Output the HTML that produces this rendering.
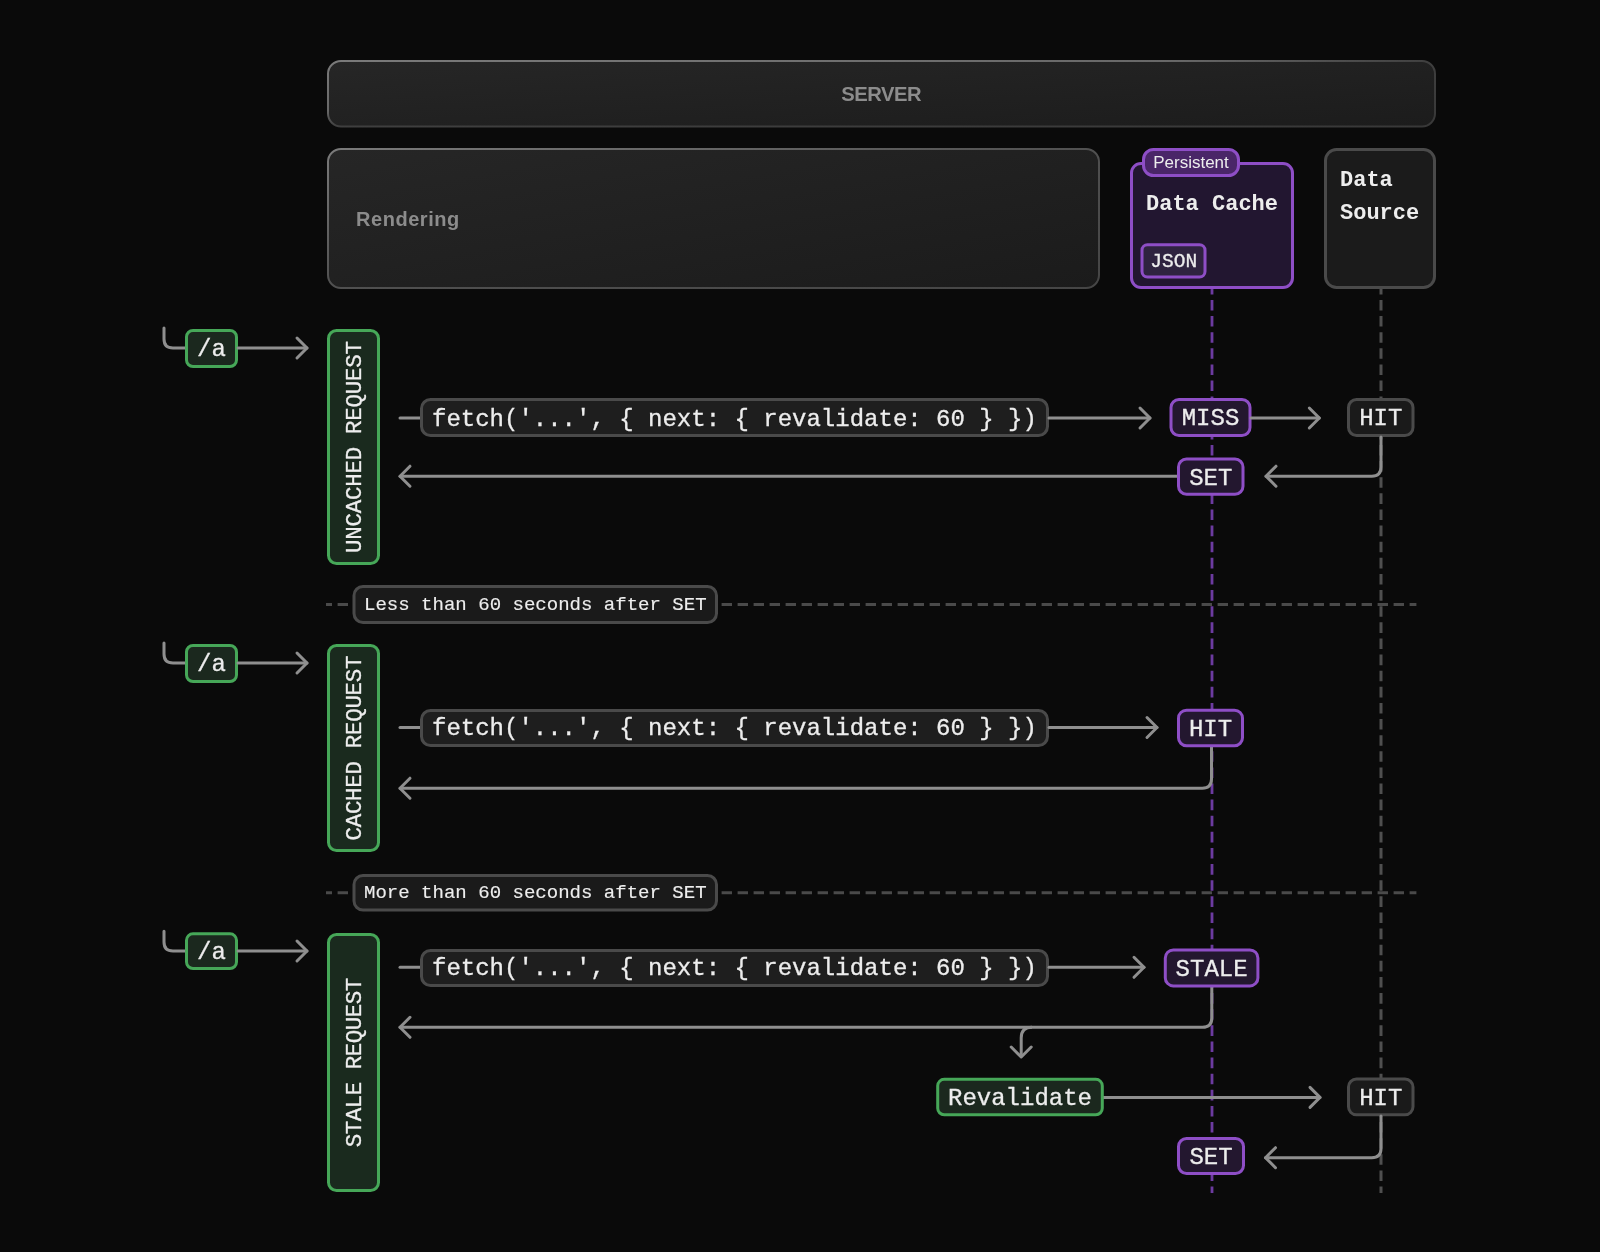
<!DOCTYPE html><html><head><meta charset="utf-8"><style>html,body{margin:0;padding:0;background:#0a0a0a;}svg{display:block;will-change:transform;}</style></head><body>
<svg width="1600" height="1252" viewBox="0 0 1600 1252">
<defs>
<linearGradient id="fill1" x1="0" y1="0" x2="1" y2="1"><stop offset="0" stop-color="#262626"/><stop offset="1" stop-color="#1c1c1c"/></linearGradient>
<linearGradient id="stroke1" x1="0" y1="0" x2="1" y2="1"><stop offset="0" stop-color="#7a7a7a"/><stop offset="0.38" stop-color="#686868"/><stop offset="0.5" stop-color="#3f3f3f"/><stop offset="1" stop-color="#383838"/></linearGradient>
<linearGradient id="fill2" x1="0" y1="0" x2="1" y2="1"><stop offset="0" stop-color="#262626"/><stop offset="1" stop-color="#1b1b1b"/></linearGradient>
<linearGradient id="stroke2" x1="0" y1="0" x2="1" y2="1"><stop offset="0" stop-color="#7a7a7a"/><stop offset="0.5" stop-color="#505050"/><stop offset="1" stop-color="#454545"/></linearGradient>
</defs>
<rect width="1600" height="1252" fill="#0a0a0a"/>
<rect x="328.00" y="61.00" width="1107.00" height="65.50" rx="13" fill="url(#fill1)" stroke="url(#stroke1)" stroke-width="2" />
<text x="881.2" y="100.8" font-family='"Liberation Sans", sans-serif' font-size="20.2" font-weight="bold" fill="#8c8c8c" text-anchor="middle"  letter-spacing="-0.5">SERVER</text>
<rect x="328.00" y="149.00" width="771.00" height="139.00" rx="13" fill="url(#fill2)" stroke="url(#stroke2)" stroke-width="2" />
<text x="356" y="225.5" font-family='"Liberation Sans", sans-serif' font-size="20" font-weight="bold" fill="#8c8c8c" text-anchor="start"  letter-spacing="0.55">Rendering</text>
<path d="M1212,288 V1193" stroke="#6c3ba0" stroke-width="2.8" stroke-dasharray="10.6 5.52" stroke-dashoffset="4.22"/>
<path d="M1381,288 V1193" stroke="#4f4f4f" stroke-width="3" stroke-dasharray="10.6 5.52" stroke-dashoffset="4.22"/>
<rect x="1131.50" y="163.50" width="161.00" height="124.00" rx="9.5" fill="#221630" stroke="#8e4ec6" stroke-width="3" />
<rect x="1143.50" y="149.50" width="95.00" height="26.00" rx="10" fill="#4a2668" stroke="#8e4ec6" stroke-width="3" />
<text x="1191" y="168" font-family='"Liberation Sans", sans-serif' font-size="17" font-weight="normal" fill="#ededed" text-anchor="middle"  >Persistent</text>
<text x="1146" y="210" font-family='"Liberation Mono", monospace' font-size="22" font-weight="bold" fill="#ededed" text-anchor="start"  xml:space="preserve">Data Cache</text>
<rect x="1142.00" y="244.70" width="63.00" height="32.40" rx="5.5" fill="#2f2340" stroke="#8e4ec6" stroke-width="3" />
<text x="1173.7" y="267" font-family='"Liberation Mono", monospace' font-size="19.5" font-weight="normal" fill="#ededed" text-anchor="middle" stroke="#ededed" stroke-width="0.3" >JSON</text>
<rect x="1325.50" y="149.50" width="109.00" height="138.00" rx="11" fill="#1b1b1b" stroke="#4a4a4a" stroke-width="3" />
<text x="1340" y="186" font-family='"Liberation Mono", monospace' font-size="22" font-weight="bold" fill="#ededed" text-anchor="start"  >Data</text>
<text x="1340" y="219" font-family='"Liberation Mono", monospace' font-size="22" font-weight="bold" fill="#ededed" text-anchor="start"  >Source</text>
<path d="M164,328 V339 Q164,348 173,348 H187" fill="none" stroke="#8f8f8f" stroke-width="3" stroke-linecap="round" stroke-linejoin="round" />
<rect x="186.50" y="330.50" width="50.00" height="36.00" rx="6.5" fill="#1b281e" stroke="#46a758" stroke-width="3" />
<text x="211.5" y="356.408" font-family='"Liberation Mono", monospace' font-size="24" font-weight="normal" fill="#ededed" text-anchor="middle" stroke="#ededed" stroke-width="0.3" >/a</text>
<path d="M238,348 H307" fill="none" stroke="#8f8f8f" stroke-width="3" stroke-linecap="round" stroke-linejoin="round" />
<path d="M297,338 L307,348 L297,358" fill="none" stroke="#8f8f8f" stroke-width="3" stroke-linecap="round" stroke-linejoin="round" />
<rect x="328.50" y="330.50" width="50.00" height="233.00" rx="8" fill="#1a2a1e" stroke="#46a758" stroke-width="3" />
<text transform="translate(361.4,447.00) rotate(-90)" x="-106.00" y="0" font-family='"Liberation Mono", monospace' font-size="22.5" fill="#ededed" stroke="#ededed" stroke-width="0.3" textLength="212" lengthAdjust="spacing" xml:space="preserve">UNCACHED REQUEST</text>
<path d="M400,418 H421" fill="none" stroke="#8f8f8f" stroke-width="3" stroke-linecap="round" stroke-linejoin="round" />
<rect x="421.50" y="399.50" width="626.00" height="36.00" rx="9" fill="#1e1e1e" stroke="#4a4a4a" stroke-width="3" />
<text x="432" y="425.908" font-family='"Liberation Mono", monospace' font-size="24" font-weight="normal" fill="#ededed" text-anchor="start" stroke="#ededed" stroke-width="0.3" xml:space="preserve">fetch('...', { next: { revalidate: 60 } })</text>
<path d="M1049,418 H1150" fill="none" stroke="#8f8f8f" stroke-width="3" stroke-linecap="round" stroke-linejoin="round" />
<path d="M1140,408 L1150,418 L1140,428" fill="none" stroke="#8f8f8f" stroke-width="3" stroke-linecap="round" stroke-linejoin="round" />
<rect x="1171.00" y="399.50" width="79.00" height="36.00" rx="8" fill="#23172f" stroke="#8e4ec6" stroke-width="3" />
<text x="1210.5" y="425.408" font-family='"Liberation Mono", monospace' font-size="24" font-weight="normal" fill="#ededed" text-anchor="middle" stroke="#ededed" stroke-width="0.3" >MISS</text>
<path d="M1251,418 H1319.3" fill="none" stroke="#8f8f8f" stroke-width="3" stroke-linecap="round" stroke-linejoin="round" />
<path d="M1309.3,408 L1319.3,418 L1309.3,428" fill="none" stroke="#8f8f8f" stroke-width="3" stroke-linecap="round" stroke-linejoin="round" />
<rect x="1348.50" y="399.50" width="64.50" height="36.00" rx="8" fill="#1a1a1a" stroke="#4a4a4a" stroke-width="3" />
<text x="1380.75" y="425.408" font-family='"Liberation Mono", monospace' font-size="24" font-weight="normal" fill="#ededed" text-anchor="middle" stroke="#ededed" stroke-width="0.3" >HIT</text>
<path d="M1381,437 V467 Q1381,476.2 1371.8,476.2 H1266" fill="none" stroke="#8f8f8f" stroke-width="3" stroke-linecap="round" stroke-linejoin="round" />
<path d="M1276,466.2 L1266,476.2 L1276,486.2" fill="none" stroke="#8f8f8f" stroke-width="3" stroke-linecap="round" stroke-linejoin="round" />
<path d="M1178,476.2 H400" fill="none" stroke="#8f8f8f" stroke-width="3" stroke-linecap="round" stroke-linejoin="round" />
<path d="M410,466.2 L400,476.2 L410,486.2" fill="none" stroke="#8f8f8f" stroke-width="3" stroke-linecap="round" stroke-linejoin="round" />
<rect x="1178.50" y="459.00" width="64.50" height="35.20" rx="8" fill="#23172f" stroke="#8e4ec6" stroke-width="3" />
<text x="1210.75" y="484.50800000000004" font-family='"Liberation Mono", monospace' font-size="24" font-weight="normal" fill="#ededed" text-anchor="middle" stroke="#ededed" stroke-width="0.3" >SET</text>
<path d="M326,604.5 H1416.4" stroke="#4a4a4a" stroke-width="3" stroke-dasharray="10.4 5.6" stroke-dashoffset="4.4"/>
<rect x="354.00" y="586.50" width="362.50" height="36.00" rx="9" fill="#1a1a1a" stroke="#4a4a4a" stroke-width="3" />
<text x="364" y="609.876975" font-family='"Liberation Mono", monospace' font-size="19.05" font-weight="normal" fill="#ededed" text-anchor="start" stroke="#ededed" stroke-width="0.15" xml:space="preserve">Less than 60 seconds after SET</text>
<path d="M164,643 V654 Q164,663 173,663 H187" fill="none" stroke="#8f8f8f" stroke-width="3" stroke-linecap="round" stroke-linejoin="round" />
<rect x="186.50" y="645.50" width="50.00" height="36.00" rx="6.5" fill="#1b281e" stroke="#46a758" stroke-width="3" />
<text x="211.5" y="671.408" font-family='"Liberation Mono", monospace' font-size="24" font-weight="normal" fill="#ededed" text-anchor="middle" stroke="#ededed" stroke-width="0.3" >/a</text>
<path d="M238,663 H307" fill="none" stroke="#8f8f8f" stroke-width="3" stroke-linecap="round" stroke-linejoin="round" />
<path d="M297,653 L307,663 L297,673" fill="none" stroke="#8f8f8f" stroke-width="3" stroke-linecap="round" stroke-linejoin="round" />
<rect x="328.50" y="645.50" width="50.00" height="205.00" rx="8" fill="#1a2a1e" stroke="#46a758" stroke-width="3" />
<text transform="translate(361.4,748.00) rotate(-90)" x="-92.50" y="0" font-family='"Liberation Mono", monospace' font-size="22.5" fill="#ededed" stroke="#ededed" stroke-width="0.3" textLength="185" lengthAdjust="spacing" xml:space="preserve">CACHED REQUEST</text>
<path d="M400,727.5 H421" fill="none" stroke="#8f8f8f" stroke-width="3" stroke-linecap="round" stroke-linejoin="round" />
<rect x="421.50" y="710.50" width="626.00" height="35.00" rx="9" fill="#1e1e1e" stroke="#4a4a4a" stroke-width="3" />
<text x="432" y="735.408" font-family='"Liberation Mono", monospace' font-size="24" font-weight="normal" fill="#ededed" text-anchor="start" stroke="#ededed" stroke-width="0.3" xml:space="preserve">fetch('...', { next: { revalidate: 60 } })</text>
<path d="M1049,727.5 H1157" fill="none" stroke="#8f8f8f" stroke-width="3" stroke-linecap="round" stroke-linejoin="round" />
<path d="M1147,717.5 L1157,727.5 L1147,737.5" fill="none" stroke="#8f8f8f" stroke-width="3" stroke-linecap="round" stroke-linejoin="round" />
<path d="M1211.5,747 V779 Q1211.5,788.2 1202.3,788.2 H400" fill="none" stroke="#8f8f8f" stroke-width="3" stroke-linecap="round" stroke-linejoin="round" />
<path d="M410,778.2 L400,788.2 L410,798.2" fill="none" stroke="#8f8f8f" stroke-width="3" stroke-linecap="round" stroke-linejoin="round" />
<rect x="1178.50" y="710.20" width="64.00" height="35.50" rx="8" fill="#23172f" stroke="#8e4ec6" stroke-width="3" />
<text x="1210.5" y="735.8580000000001" font-family='"Liberation Mono", monospace' font-size="24" font-weight="normal" fill="#ededed" text-anchor="middle" stroke="#ededed" stroke-width="0.3" >HIT</text>
<path d="M326,892.75 H1416.4" stroke="#4a4a4a" stroke-width="3" stroke-dasharray="10.4 5.6" stroke-dashoffset="4.4"/>
<rect x="354.00" y="875.50" width="362.50" height="34.50" rx="9" fill="#1a1a1a" stroke="#4a4a4a" stroke-width="3" />
<text x="364" y="898.126975" font-family='"Liberation Mono", monospace' font-size="19.05" font-weight="normal" fill="#ededed" text-anchor="start" stroke="#ededed" stroke-width="0.15" xml:space="preserve">More than 60 seconds after SET</text>
<path d="M164,931.3 V942 Q164,951 173,951 H187" fill="none" stroke="#8f8f8f" stroke-width="3" stroke-linecap="round" stroke-linejoin="round" />
<rect x="186.50" y="933.80" width="50.00" height="34.70" rx="6.5" fill="#1b281e" stroke="#46a758" stroke-width="3" />
<text x="211.5" y="959.058" font-family='"Liberation Mono", monospace' font-size="24" font-weight="normal" fill="#ededed" text-anchor="middle" stroke="#ededed" stroke-width="0.3" >/a</text>
<path d="M238,951 H307" fill="none" stroke="#8f8f8f" stroke-width="3" stroke-linecap="round" stroke-linejoin="round" />
<path d="M297,941 L307,951 L297,961" fill="none" stroke="#8f8f8f" stroke-width="3" stroke-linecap="round" stroke-linejoin="round" />
<rect x="328.50" y="934.50" width="50.00" height="256.00" rx="8" fill="#1a2a1e" stroke="#46a758" stroke-width="3" />
<text transform="translate(361.4,1062.50) rotate(-90)" x="-84.70" y="0" font-family='"Liberation Mono", monospace' font-size="22.5" fill="#ededed" stroke="#ededed" stroke-width="0.3" textLength="169.4" lengthAdjust="spacing" xml:space="preserve">STALE REQUEST</text>
<path d="M400,967.3 H421" fill="none" stroke="#8f8f8f" stroke-width="3" stroke-linecap="round" stroke-linejoin="round" />
<rect x="421.50" y="950.50" width="626.00" height="35.00" rx="9" fill="#1e1e1e" stroke="#4a4a4a" stroke-width="3" />
<text x="432" y="975.208" font-family='"Liberation Mono", monospace' font-size="24" font-weight="normal" fill="#ededed" text-anchor="start" stroke="#ededed" stroke-width="0.3" xml:space="preserve">fetch('...', { next: { revalidate: 60 } })</text>
<path d="M1049,967.3 H1144" fill="none" stroke="#8f8f8f" stroke-width="3" stroke-linecap="round" stroke-linejoin="round" />
<path d="M1134,957.3 L1144,967.3 L1134,977.3" fill="none" stroke="#8f8f8f" stroke-width="3" stroke-linecap="round" stroke-linejoin="round" />
<path d="M1211.8,987 V1018 Q1211.8,1027.3 1202.5,1027.3 H400" fill="none" stroke="#8f8f8f" stroke-width="3" stroke-linecap="round" stroke-linejoin="round" />
<path d="M410,1017.3 L400,1027.3 L410,1037.3" fill="none" stroke="#8f8f8f" stroke-width="3" stroke-linecap="round" stroke-linejoin="round" />
<path d="M1032,1027.3 Q1021.2,1027.3 1021.2,1038 V1057" fill="none" stroke="#8f8f8f" stroke-width="3" stroke-linecap="butt"/>
<path d="M1011.2,1047 L1021.2,1057 L1031.2,1047" fill="none" stroke="#8f8f8f" stroke-width="3" stroke-linecap="round" stroke-linejoin="round" />
<rect x="1165.30" y="949.90" width="92.60" height="36.00" rx="8" fill="#23172f" stroke="#8e4ec6" stroke-width="3" />
<text x="1211.6" y="975.808" font-family='"Liberation Mono", monospace' font-size="24" font-weight="normal" fill="#ededed" text-anchor="middle" stroke="#ededed" stroke-width="0.3" >STALE</text>
<path d="M1103,1097.4 H1320" fill="none" stroke="#8f8f8f" stroke-width="3" stroke-linecap="round" stroke-linejoin="round" />
<path d="M1310,1087.4 L1320,1097.4 L1310,1107.4" fill="none" stroke="#8f8f8f" stroke-width="3" stroke-linecap="round" stroke-linejoin="round" />
<rect x="937.70" y="1079.30" width="164.60" height="35.50" rx="6.5" fill="#1b281e" stroke="#46a758" stroke-width="3" />
<text x="1020.0" y="1104.9579999999999" font-family='"Liberation Mono", monospace' font-size="24" font-weight="normal" fill="#ededed" text-anchor="middle" stroke="#ededed" stroke-width="0.3" >Revalidate</text>
<rect x="1348.50" y="1079.00" width="64.50" height="35.80" rx="8" fill="#1a1a1a" stroke="#4a4a4a" stroke-width="3" />
<text x="1380.75" y="1104.808" font-family='"Liberation Mono", monospace' font-size="24" font-weight="normal" fill="#ededed" text-anchor="middle" stroke="#ededed" stroke-width="0.3" >HIT</text>
<path d="M1381,1116 V1148.5 Q1381,1157.7 1371.8,1157.7 H1265.5" fill="none" stroke="#8f8f8f" stroke-width="3" stroke-linecap="round" stroke-linejoin="round" />
<path d="M1275.5,1147.7 L1265.5,1157.7 L1275.5,1167.7" fill="none" stroke="#8f8f8f" stroke-width="3" stroke-linecap="round" stroke-linejoin="round" />
<rect x="1178.50" y="1138.50" width="65.00" height="35.00" rx="8" fill="#23172f" stroke="#8e4ec6" stroke-width="3" />
<text x="1211.0" y="1163.908" font-family='"Liberation Mono", monospace' font-size="24" font-weight="normal" fill="#ededed" text-anchor="middle" stroke="#ededed" stroke-width="0.3" >SET</text>
</svg></body></html>
